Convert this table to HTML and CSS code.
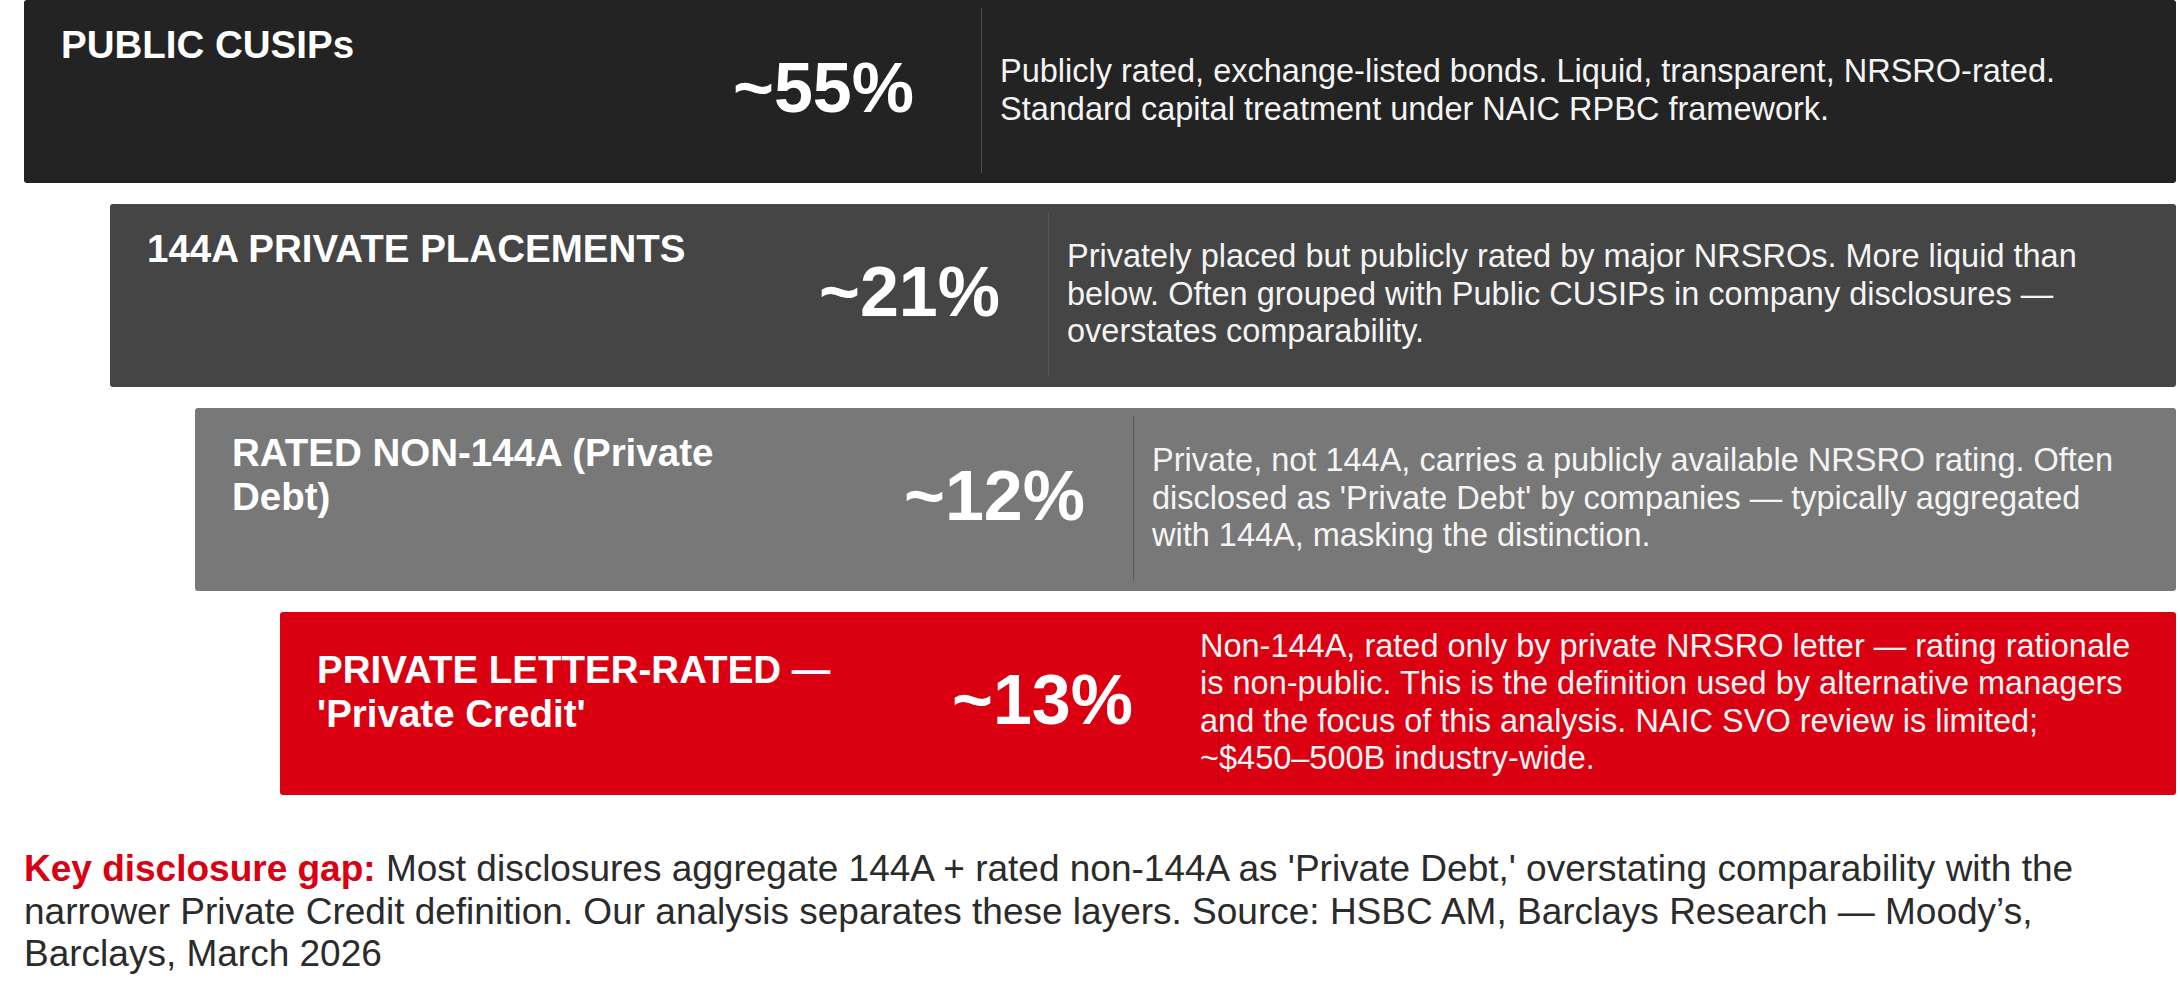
FILE: index.html
```html
<!DOCTYPE html>
<html lang="en">
<head>
<meta charset="utf-8">
<title>Private credit taxonomy</title>
<link rel="stylesheet" href="styles.css">
</head>
<body>
<main class="page">
  <div class="tiers">
    <section class="tier tier--public">
      <h3 class="tier__label">PUBLIC CUSIPs</h3>
      <div class="tier__pct">~55%</div>
      <div class="tier__desc"><p>Publicly rated, exchange-listed bonds. Liquid, transparent, NRSRO-rated. Standard capital treatment under NAIC RPBC framework.</p></div>
    </section>
    <section class="tier tier--144a">
      <h3 class="tier__label">144A PRIVATE PLACEMENTS</h3>
      <div class="tier__pct">~21%</div>
      <div class="tier__desc"><p>Privately placed but publicly rated by major NRSROs. More liquid than below. Often grouped with Public CUSIPs in company disclosures — overstates comparability.</p></div>
    </section>
    <section class="tier tier--rated">
      <h3 class="tier__label">RATED NON-144A (Private Debt)</h3>
      <div class="tier__pct">~12%</div>
      <div class="tier__desc"><p>Private, not 144A, carries a publicly available NRSRO rating. Often disclosed as 'Private Debt' by companies — typically aggregated with 144A, masking the distinction.</p></div>
    </section>
    <section class="tier tier--letter">
      <h3 class="tier__label">PRIVATE LETTER-RATED — 'Private Credit'</h3>
      <div class="tier__pct">~13%</div>
      <div class="tier__desc"><p>Non-144A, rated only by private NRSRO letter — rating rationale is non-public. This is the definition used by alternative managers and the focus of this analysis. NAIC SVO review is limited; ~$450–500B industry-wide.</p></div>
    </section>
  </div>
  <p class="note"><strong>Key disclosure gap:</strong> Most disclosures aggregate 144A + rated non-144A as 'Private Debt,' overstating comparability with the narrower Private Credit definition. Our analysis separates these layers. Source: HSBC AM, Barclays Research — Moody’s, Barclays, March 2026</p>
</main>
</body>
</html>
```
FILE: styles.css
```css
* { box-sizing: border-box; }

body {
  margin: 0;
  background: #ffffff;
  font-family: "Liberation Sans", Arial, Helvetica, sans-serif;
}

.page {
  padding: 0 4px 0 24px;
}

.tiers {
  display: flex;
  flex-direction: column;
  gap: 21px;
}

.tier {
  display: flex;
  min-height: 183px;
  padding: 8px 40px 10px 37px;
  border-radius: 3px;
  color: #ffffff;
}

.tier--public { background: #232323; }
.tier--144a { background: #454545; margin-left: 86px; }
.tier--rated { background: #787878; margin-left: 171px; }
.tier--letter { background: #db0011; margin-left: 256px; }

.tier__label {
  flex: 0 0 565px;
  margin: 0;
  padding-top: 15px;
  font-size: 38.5px;
  line-height: 1.15;
  font-weight: 700;
}

.tier__pct {
  flex: 0 0 288px;
  align-self: center;
  padding-bottom: 5px;
  text-align: right;
  font-size: 70px;
  line-height: 1;
  font-weight: 700;
}

.tier__desc {
  flex: 1;
  display: flex;
  align-items: center;
  margin-left: 48px;
  padding-left: 18px;
  border-left: 1px solid #575757;
}

.tier__desc p {
  margin: 0;
  font-size: 32.5px;
  line-height: 37.5px;
  color: #f4f4f4;
}

/* per-tier adjustments */
.tier--public .tier__desc { margin-left: 67px; border-left-color: #505050; }
.tier--rated .tier__desc { border-left-color: #5a5a5a; }

.tier--letter .tier__label { padding-top: 28px; }
.tier--letter .tier__pct { flex-basis: 251px; }
.tier--letter .tier__desc { margin-left: 85px; border-left-color: #b3000e; }
.tier--letter .tier__desc p { margin-left: -37px; }

.note {
  margin: 53px 0 0;
  font-size: 37px;
  line-height: 42.5px;
  color: #2b2b2b;
}

.note strong {
  color: #db0011;
  font-weight: 700;
}
```
